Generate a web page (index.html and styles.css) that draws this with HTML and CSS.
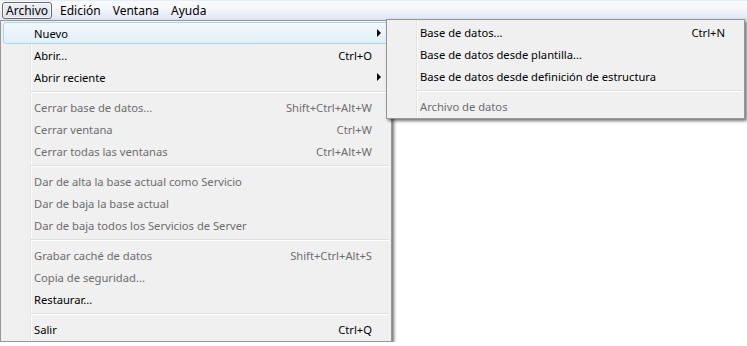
FILE: index.html
```html
<!DOCTYPE html>
<html lang="es">
<head>
  <meta charset="utf-8">
  <title>Archivo</title>
  <link rel="stylesheet" href="styles.css">
</head>
<body>
  <!-- Menu bar -->
  <div class="menubar">
    <span class="top-item pressed">Archivo</span>
    <span class="top-item">Edición</span>
    <span class="top-item">Ventana</span>
    <span class="top-item">Ayuda</span>
  </div>

  <!-- Archivo dropdown -->
  <div class="menu main-menu">
    <div class="item hot"><span class="label">Nuevo</span><span class="key"></span><span class="arrow"></span></div>
    <div class="item"><span class="label">Abrir...</span><span class="key">Ctrl+O</span><span class="no-arrow"></span></div>
    <div class="item"><span class="label">Abrir reciente</span><span class="key"></span><span class="arrow"></span></div>
    <div class="sep"></div>
    <div class="item off"><span class="label">Cerrar base de datos...</span><span class="key">Shift+Ctrl+Alt+W</span><span class="no-arrow"></span></div>
    <div class="item off"><span class="label">Cerrar ventana</span><span class="key">Ctrl+W</span><span class="no-arrow"></span></div>
    <div class="item off"><span class="label">Cerrar todas las ventanas</span><span class="key">Ctrl+Alt+W</span><span class="no-arrow"></span></div>
    <div class="sep"></div>
    <div class="item off"><span class="label">Dar de alta la base actual como Servicio</span><span class="key"></span><span class="no-arrow"></span></div>
    <div class="item off"><span class="label">Dar de baja la base actual</span><span class="key"></span><span class="no-arrow"></span></div>
    <div class="item off"><span class="label">Dar de baja todos los Servicios de Server</span><span class="key"></span><span class="no-arrow"></span></div>
    <div class="sep"></div>
    <div class="item off"><span class="label">Grabar caché de datos</span><span class="key">Shift+Ctrl+Alt+S</span><span class="no-arrow"></span></div>
    <div class="item off"><span class="label">Copia de seguridad...</span><span class="key"></span><span class="no-arrow"></span></div>
    <div class="item"><span class="label">Restaurar...</span><span class="key"></span><span class="no-arrow"></span></div>
    <div class="sep"></div>
    <div class="item"><span class="label">Salir</span><span class="key">Ctrl+Q</span><span class="no-arrow"></span></div>

    <!-- Nuevo submenu -->
    <div class="menu sub-menu">
      <div class="item"><span class="label">Base de datos...</span><span class="key">Ctrl+N</span><span class="no-arrow"></span></div>
      <div class="item"><span class="label">Base de datos desde plantilla...</span><span class="key"></span><span class="no-arrow"></span></div>
      <div class="item"><span class="label">Base de datos desde definición de estructura</span><span class="key"></span><span class="no-arrow"></span></div>
      <div class="sep"></div>
      <div class="item off"><span class="label">Archivo de datos</span><span class="key"></span><span class="no-arrow"></span></div>
    </div>
  </div>
</body>
</html>
```

FILE: styles.css
```css
body { margin: 0; background: #fff; font-family: "Noto Sans", "Open Sans", sans-serif; font-size: 12px; color: #000; }

.menubar { height: 20px; display: flex; align-items: center; gap: 4px; padding-left: 2px; background: linear-gradient(#d3e1f2 0, #f8fafd 1px, #f4f6fb 9px, #dfe5f4 20px); }
.top-item { height: 15px; line-height: 15px; padding: 0 3px; border: 1px solid transparent; border-radius: 3px; }
.top-item.pressed { padding: 0 3px; border-color: #6a6a6a; background: linear-gradient(#eef0f6, #dde2ec); box-shadow: inset 0 0 0 1px rgba(255,255,255,0.6); }

.menu { position: relative; box-sizing: border-box; border: 1px solid #979797; padding: 1px 0 1px; font-size: 11.2px;
  background: linear-gradient(to right, transparent 29px, #e2e3e3 29px, #e2e3e3 30px, #fff 30px, #fff 31px, transparent 31px) #f0f0f0;
  box-shadow: 2px 2px 3px rgba(0,0,0,0.55); }
.main-menu { width: 392px; }
.sub-menu { position: absolute; left: 385px; top: -2px; width: 359px; }

.item { display: flex; align-items: center; height: 20px; margin: 0 2px; padding-left: 30px; border: 1px solid transparent; border-radius: 3px; white-space: nowrap; }
.item.hot { border-color: #a8d8ec; background: linear-gradient(#f1f8fc, #e2f0f9); }
.item.off { color: #6d6d6d; }
.label { flex: 1; }
.key { text-align: right; }
.arrow, .no-arrow { width: 16px; height: 20px; flex: none; position: relative; }
.arrow::after { content: ""; position: absolute; left: 5px; top: 6px; border-style: solid; border-width: 4px 0 4px 4px; border-color: transparent transparent transparent #000; }

.sep { height: 0; border-top: 1px solid #e0e0e0; border-bottom: 1px solid #fff; margin: 3px 2px 3px 30px; }
```
